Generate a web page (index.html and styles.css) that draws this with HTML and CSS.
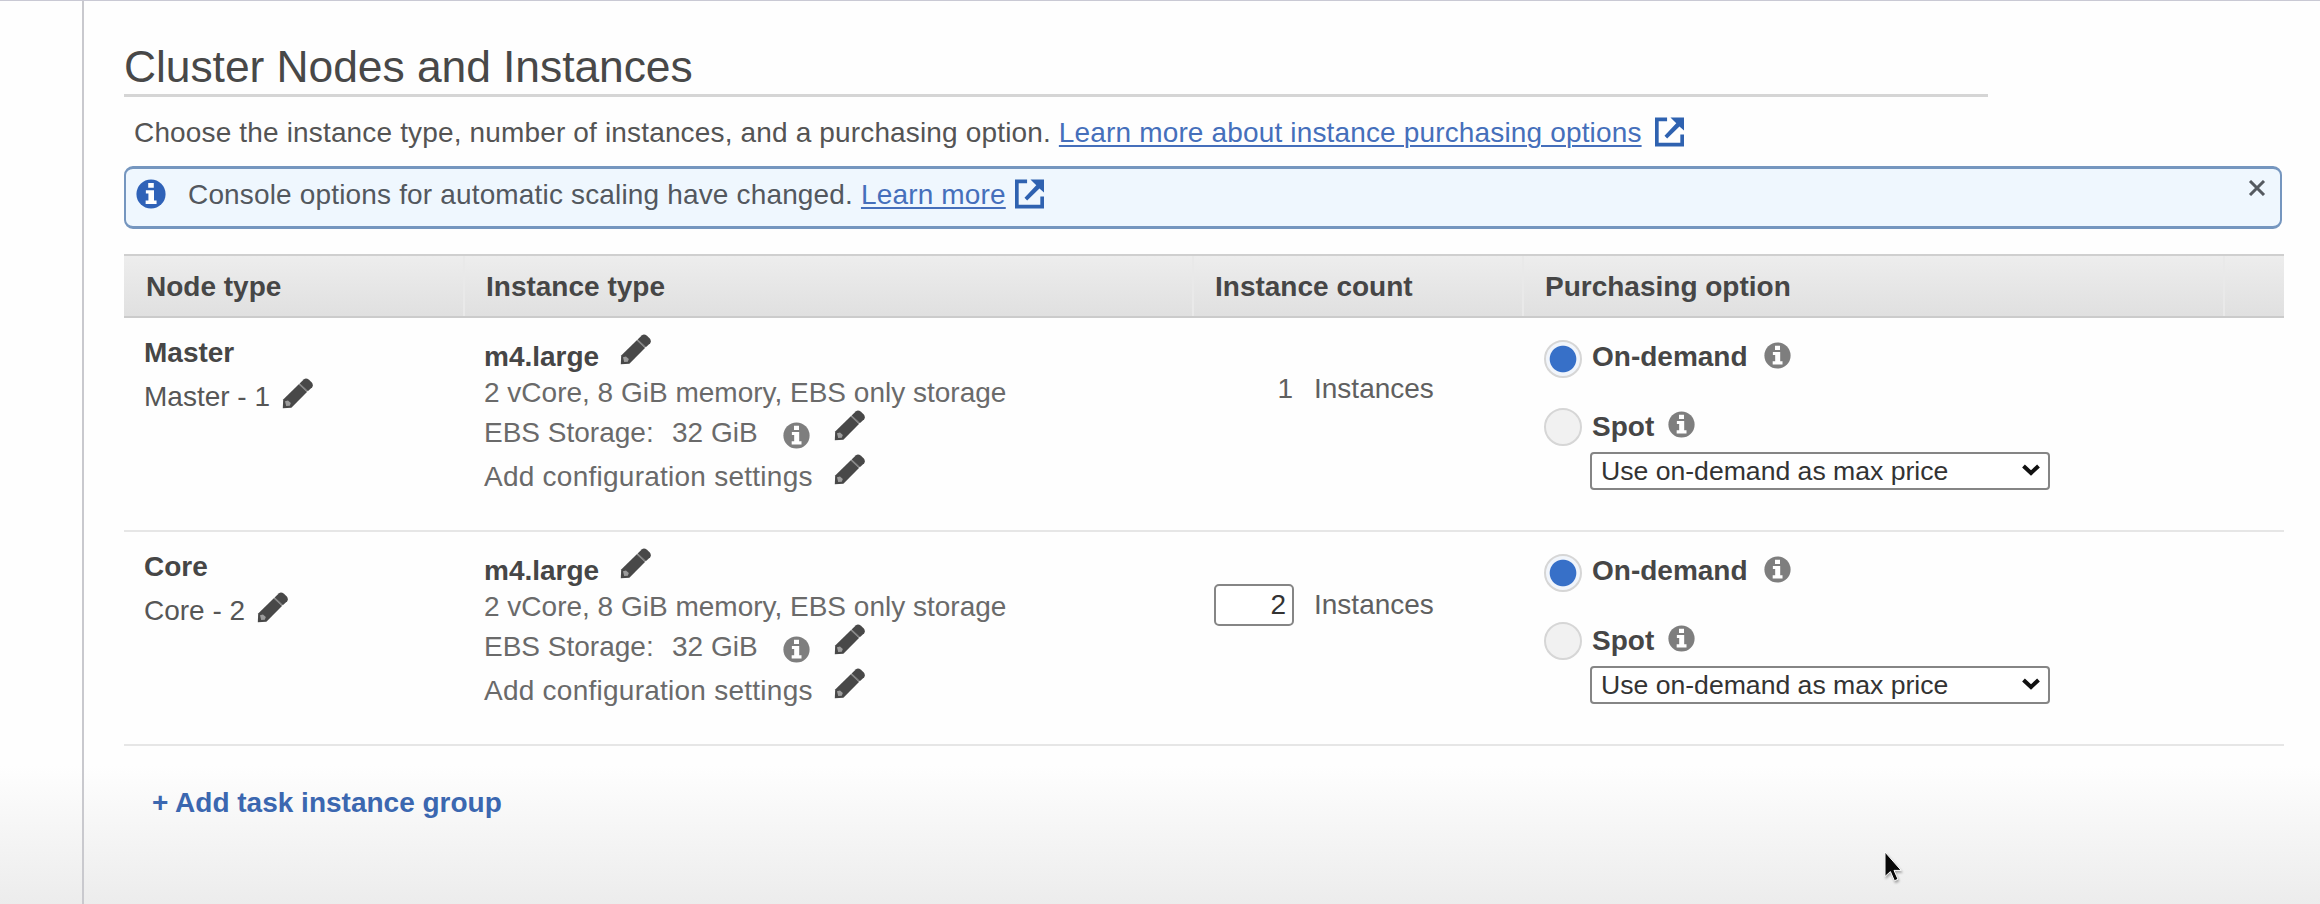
FILE: index.html
```html
<!DOCTYPE html>
<html lang="en">
<head>
<meta charset="utf-8">
<title>Cluster Nodes and Instances</title>
<link rel="stylesheet" href="styles.css">
</head>
<body>
<svg class="sprite" aria-hidden="true">
  <symbol id="pencil" viewBox="0 0 32 31">
    <path d="M0.8 30.3 L1.2 21.6 L16.8 6.2 L25 14 L9.4 29.8 Z" fill="#484848"/>
    <path d="M17.6 5.4 L22 1.2 Q24.2 -0.2 27 1.8 L29.8 4.6 Q31.6 7 30.2 9.2 L25.8 13.2 Z" fill="#484848"/>
    <path d="M17.4 6 L25.2 13.4" stroke="#808080" stroke-width="1.6"/>
    <path d="M3 23.2 L6 22.4 L8.8 25 L7.8 27.8 L4.2 28 Z" fill="#9c9c9c"/>
  </symbol>
  <symbol id="info" viewBox="0 0 28 28">
    <circle cx="14" cy="14" r="13.6" fill="currentColor"/>
    <path d="M11.4 3.8h5.2v4.4h-5.2z M9.2 10.4h7.6v9.6h2.4v3.4H9v-3.4h2.6v-6.4H9.2z" fill="#fff"/>
  </symbol>
  <symbol id="external" viewBox="0 0 30 30">
    <path d="M12.5 1.9H1.9V28.1H28.1V17.5" fill="none" stroke="#2f62b0" stroke-width="3.8"/>
    <path d="M16 0H30V13.5L25.3 9.2L12.6 21.6L9.8 18.8L22 6Z" fill="#2f62b0"/>
  </symbol>
</svg>
<div class="page">
  <main class="panel">
    <h1 class="title">Cluster Nodes and Instances</h1>
    <p class="intro">Choose the instance type, number of instances, and a purchasing option. <a class="link" href="#">Learn more about instance purchasing options</a><svg class="ext"><use href="#external"/></svg></p>
    <div class="banner">
      <svg class="banner-info"><use href="#info"/></svg>
      <p class="banner-text">Console options for automatic scaling have changed. <a class="link" href="#">Learn more</a><svg class="ext"><use href="#external"/></svg></p>
      <svg class="close" viewBox="0 0 18 16"><path d="M2 1L16 15M16 1L2 15" stroke="#555a60" stroke-width="3"/></svg>
    </div>
    <section class="table">
      <div class="row head">
        <div class="th">Node type</div>
        <div class="th">Instance type</div>
        <div class="th">Instance count</div>
        <div class="th">Purchasing option</div>
        <div class="th"></div>
      </div>
      <div class="row body">
        <div class="cell node">
          <div class="line strong">Master</div>
          <div class="line dark">Master - 1<svg class="pencil low"><use href="#pencil"/></svg></div>
        </div>
        <div class="cell instance">
          <div class="line strong">m4.large<svg class="pencil"><use href="#pencil"/></svg></div>
          <div class="line">2 vCore, 8 GiB memory, EBS only storage</div>
          <div class="line storage"><span class="label">EBS Storage:</span><span>32 GiB</span><svg class="info"><use href="#info"/></svg><svg class="pencil"><use href="#pencil"/></svg></div>
          <div class="line config">Add configuration settings<svg class="pencil"><use href="#pencil"/></svg></div>
        </div>
        <div class="cell count fixed"><span class="number">1</span><span>Instances</span></div>
        <div class="cell purchase">
          <div class="line strong option"><span class="radio on"></span>On-demand<svg class="info"><use href="#info"/></svg></div>
          <div class="line strong option spot"><span class="radio"></span>Spot<svg class="info"><use href="#info"/></svg></div>
          <div class="select"><span>Use on-demand as max price</span><svg class="chevron" viewBox="0 0 18 12"><path d="M1.5 2L9 9L16.5 2" fill="none" stroke="#111" stroke-width="4"/></svg></div>
        </div>
      </div>
      <div class="row body">
        <div class="cell node">
          <div class="line strong">Core</div>
          <div class="line dark">Core - 2<svg class="pencil low"><use href="#pencil"/></svg></div>
        </div>
        <div class="cell instance">
          <div class="line strong">m4.large<svg class="pencil"><use href="#pencil"/></svg></div>
          <div class="line">2 vCore, 8 GiB memory, EBS only storage</div>
          <div class="line storage"><span class="label">EBS Storage:</span><span>32 GiB</span><svg class="info"><use href="#info"/></svg><svg class="pencil"><use href="#pencil"/></svg></div>
          <div class="line config">Add configuration settings<svg class="pencil"><use href="#pencil"/></svg></div>
        </div>
        <div class="cell count editable"><span class="number box">2</span><span>Instances</span></div>
        <div class="cell purchase">
          <div class="line strong option"><span class="radio on"></span>On-demand<svg class="info"><use href="#info"/></svg></div>
          <div class="line strong option spot"><span class="radio"></span>Spot<svg class="info"><use href="#info"/></svg></div>
          <div class="select"><span>Use on-demand as max price</span><svg class="chevron" viewBox="0 0 18 12"><path d="M1.5 2L9 9L16.5 2" fill="none" stroke="#111" stroke-width="4"/></svg></div>
        </div>
      </div>
    </section>
    <a class="add" href="#">+ Add task instance group</a>
  </main>
  <svg class="cursor" viewBox="0 0 22 32"><path d="M2 1V25.5L7.4 20.6L11.4 29.8L15 28.2L11 19.4H18.2Z" fill="#080808" stroke="#fff" stroke-width="1"/></svg>
</div>
</body>
</html>
```
FILE: styles.css
```css
* { box-sizing: border-box; }

body {
  margin: 0;
  font-family: "Liberation Sans", Arial, sans-serif;
  font-size: 28px;
  line-height: 32px;
  color: #6a6a6a;
}

svg { display: block; flex: none; }
.sprite { position: absolute; width: 0; height: 0; }

.page {
  position: relative;
  display: flex;
  width: 2320px;
  height: 904px;
  padding-left: 82px;
  overflow: hidden;
  border-top: 1px solid #c9c9d4;
  background: linear-gradient(#fefefe 0, #fefefe 765px, #ececec 904px);
}

.panel {
  flex: 1;
  padding: 41px 38px 0 40px;
  border-left: 2px solid #c9c9ce;
}

.title {
  width: 1864px;
  height: 55px;
  margin: 0;
  border-bottom: 3px solid #d5d5d5;
  font-size: 44.4px;
  font-weight: 400;
  line-height: 50px;
  letter-spacing: -0.05px;
  color: #484848;
}

.intro {
  display: flex;
  margin: 20px 0 0 10px;
  white-space: pre;
  letter-spacing: 0.155px;
  color: #545454;
}

.link {
  color: #456fbb;
  text-decoration: underline;
  text-decoration-thickness: 2px;
  text-underline-offset: 3px;
}

.ext { width: 29px; height: 30px; margin-left: 13px; }
.banner .ext { margin-left: 9px; }

.banner {
  display: flex;
  width: 2158px;
  height: 63px;
  margin-top: 17px;
  padding: 10px 13px 0 10px;
  border: 2px solid #7596bf;
  border-top-width: 3px;
  border-bottom-width: 3px;
  border-radius: 9px;
  background: #eff7fe;
}

.banner-info { width: 30px; height: 30px; color: #2f62b8; }
.banner-text { display: flex; margin: 0 0 0 22px; white-space: pre; letter-spacing: 0.16px; color: #53585e; }
.close { width: 18px; height: 16px; margin: 1px 1px 0 auto; }

.table { width: 2160px; margin-top: 25px; }
.row { display: grid; grid-template-columns: 339px 729px 330px 701px 61px; }

.head {
  height: 64px;
  border-top: 2px solid #cfcfcf;
  border-bottom: 2px solid #cbcbcb;
  background: linear-gradient(#ededed, #e0e0e0);
}

.th {
  padding: 15px 0 0 21px;
  border-left: 2px solid #e9e9e9;
  font-weight: 700;
  color: #464646;
}

.th:first-child { border-left-color: transparent; padding-left: 20px; }

.body { height: 214px; border-bottom: 2px solid #e6e6e6; }
.cell { display: flex; flex-direction: column; }
.line { display: flex; white-space: pre; }
.strong { font-weight: 700; color: #464646; }
.dark { color: #565656; }

.node { padding: 19px 0 0 20px; gap: 12px; }
.instance { padding: 23px 0 0 21px; gap: 4px; }
.storage { margin-top: 4px; }
.config { margin-top: 8px; letter-spacing: 0.25px; }
.label { width: 188px; }

.pencil { width: 32px; height: 31px; margin: -7px 0 0 21px; }
.pencil.low { margin: -3px 0 0 12px; }

.info { width: 27px; height: 27px; color: #7e7e7e; }
.storage .info { margin: 5px 0 0 25px; }
.storage .pencil { margin-left: 24px; }
.config .pencil { margin-left: 21px; }

.count { flex-direction: row; color: #606060; }
.fixed { padding: 55px 0 0 22px; }
.editable { padding: 52px 0 0 22px; line-height: 42px; }
.number { width: 80px; margin-right: 20px; padding-right: 1px; text-align: right; }
.box {
  height: 42px;
  padding-right: 6px;
  border: 2px solid #858585;
  border-radius: 5px;
  background: #fff;
  line-height: 38px;
  color: #333;
}

.purchase { padding: 23px 0 0 22px; }
.option .info { margin: 1px 0 0 16px; }
.spot { margin-top: 38px; }
.spot .info { margin: 0 0 0 14px; }

.radio {
  width: 38px;
  height: 38px;
  margin: -1px 10px -5px 0;
  border: 2px solid #d6d6d6;
  border-radius: 50%;
  background: #f1f1f1;
}

.radio.on { background: radial-gradient(circle, #3770c8 0 12.8px, #f1f5fb 13.8px); }
.spot .radio { margin-top: -3px; margin-bottom: -3px; }

.select {
  display: flex;
  justify-content: space-between;
  width: 460px;
  height: 38px;
  margin: 9px 0 0 46px;
  padding: 1px 8px 0 9px;
  border: 2px solid #858585;
  border-radius: 4px;
  background: #fff;
  font-size: 26.6px;
  color: #333;
}

.chevron { width: 18px; height: 12px; margin-top: 9px; }

.add {
  display: block;
  margin: 41px 0 0 28px;
  font-weight: 700;
  color: #3b67b0;
  text-decoration: none;
}

.cursor {
  position: absolute;
  left: 1883px;
  top: 850px;
  width: 22px;
  height: 32px;
  filter: drop-shadow(1px 2px 1px rgba(0, 0, 0, .3));
}
```
